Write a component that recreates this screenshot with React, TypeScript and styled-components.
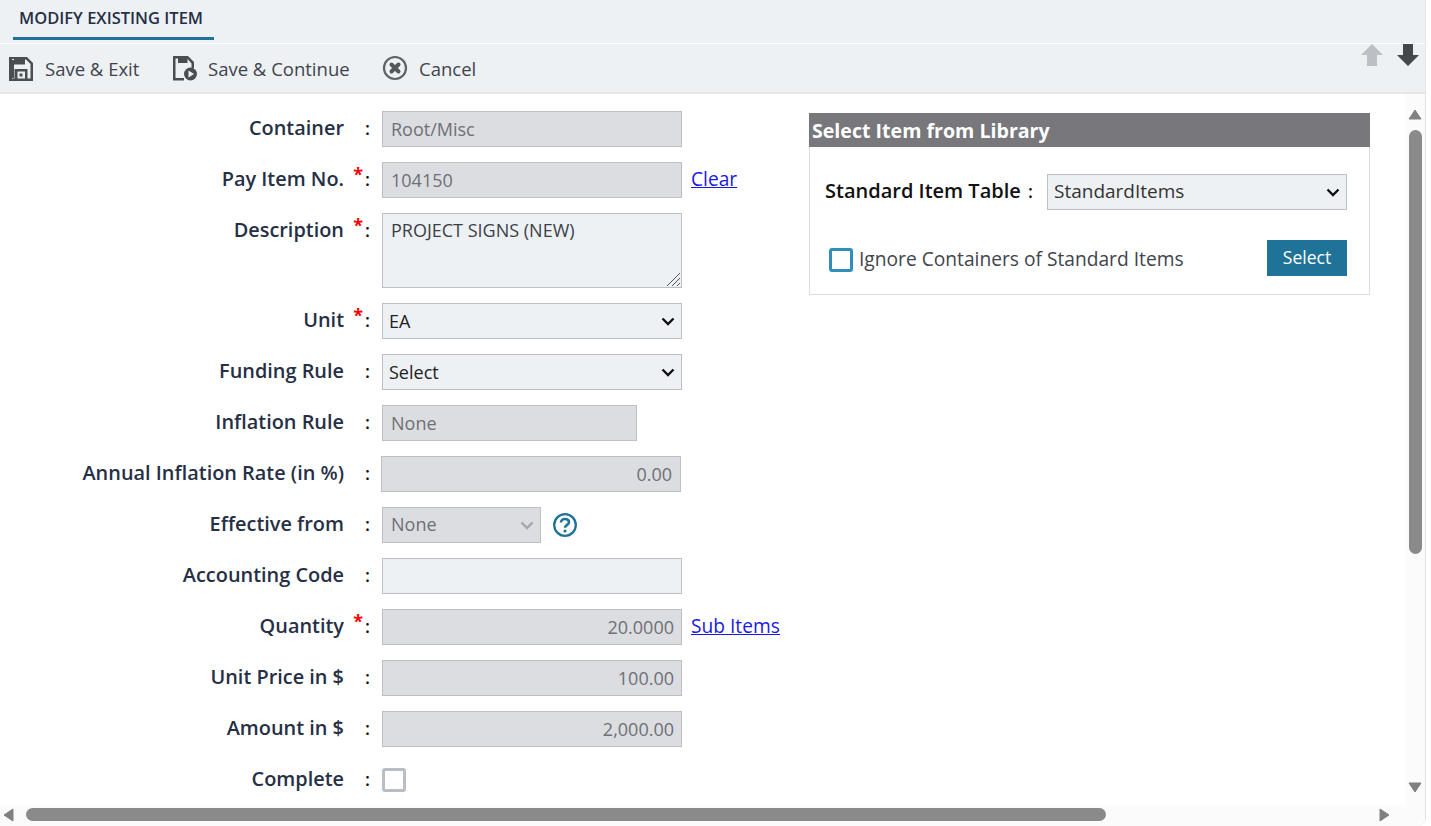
import React from "react";
import styled, { createGlobalStyle } from "styled-components";

const GlobalStyle = createGlobalStyle`
  html, body {
    margin: 0;
    padding: 0;
    height: 100%;
    overflow: hidden;
    background: #fff;
    font-family: "Open Sans", "Noto Sans", sans-serif;
  }
`;

type FieldProps = {
  label: string;
  required?: boolean;
  children: React.ReactNode;
};

const Field = ({ label, required, children }: FieldProps) => (
  <Row>
    <Label>{label}</Label>
    <Sep>
      {required && <Star>*</Star>}:
    </Sep>
    <Control>{children}</Control>
  </Row>
);

const SaveIcon = () => (
  <svg width="24" height="25" viewBox="0 0 24 25">
    <path
      fill="#4a4d52"
      fillRule="evenodd"
      d="M0 1h18l6 6v18H0V1zm5 3v18h-2V4zM16 3.500V8.500H5V3h-2V22.500H5.500V13H18.500V22.500H21.500V8L17 3.500zM8.500 15.500V22.500H16V15.500zM10.500 17.500H13.500V20.500H10.500z"
    />
  </svg>
);

const SaveContinueIcon = () => (
  <svg width="26" height="25" viewBox="0 0 26 25">
    <path
      fill="#4a4d52"
      d="M1 0h15l6 6v6h-2.500V7.500L15.500 3V7H6V2.500H3.500v19.500H12V24.500H1V0z"
    />
    <circle cx="18.500" cy="18" r="6.500" fill="#4a4d52" />
    <path fill="#eef1f4" d="M16.500 14.500l5.500 3.500-5.500 3.500z" />
  </svg>
);

const CancelIcon = () => (
  <svg width="26" height="26" viewBox="0 0 26 26">
    <circle cx="13" cy="13" r="11" fill="none" stroke="#5e6166" strokeWidth="2.200" />
    <path stroke="#54575c" strokeWidth="4" strokeLinecap="round" d="M9.500 9.500l7 7M16.500 9.500l-7 7" />
  </svg>
);

const HelpIcon = () => (
  <svg width="26" height="26" viewBox="0 0 26 26">
    <circle cx="13" cy="13" r="10.800" fill="none" stroke="#1f7399" strokeWidth="2.300" />
    <path
      fill="none"
      stroke="#1f7399"
      strokeWidth="2.600"
      d="M9 10.500c0-2.300 1.800-3.500 4-3.500s4 1.200 4 3.200c0 2.800-4 2.600-4 5.600"
    />
    <circle cx="13" cy="19" r="1.600" fill="#1f7399" />
  </svg>
);

const NavArrow = ({ down, color }: { down?: boolean; color: string }) => (
  <svg width="24" height="24" viewBox="0 0 24 24">
    <path
      fill={color}
      d={down ? "M7 1h10v11h6L12 23 1 12h6z" : "M12 1l11 11h-6v11H7V12H1z"}
    />
  </svg>
);

const Tri = ({ dir }: { dir: "up" | "down" | "left" | "right" }) => {
  const paths = {
    up: "M7 2l6 9H1z",
    down: "M1 3h12L7 12z",
    left: "M11 1v12L2 7z",
    right: "M2 1v12l9-6z",
  };
  return (
    <svg width="14" height="14" viewBox="0 0 14 14">
      <path fill="#808080" stroke="#808080" strokeLinejoin="round" d={paths[dir]} />
    </svg>
  );
};

export default function App() {
  return (
    <Page>
      <GlobalStyle />
      <TabBar>
        <Tab>MODIFY EXISTING ITEM</Tab>
      </TabBar>
      <Toolbar>
        <ToolButton $width={163} $gap={12}>
          <SaveIcon />
          <span>Save &amp; Exit</span>
        </ToolButton>
        <ToolButton $width={210} $gap={10}>
          <SaveContinueIcon />
          <span>Save &amp; Continue</span>
        </ToolButton>
        <ToolButton $width={110} $gap={11}>
          <CancelIcon />
          <span>Cancel</span>
        </ToolButton>
        <NavGroup>
          <NavArrow color="#bcc0c4" />
          <NavArrow down color="#44474c" />
        </NavGroup>
      </Toolbar>
      <Middle>
        <Content>
          <Form>
            <Field label="Container">
              <TextInput $w={300} $disabled readOnly value="Root/Misc" />
            </Field>
            <Field label="Pay Item No." required>
              <TextInput $w={300} $disabled readOnly value="104150" />
              <Link href="#">Clear</Link>
            </Field>
            <Field label="Description" required>
              <TextArea readOnly value="PROJECT SIGNS (NEW)" />
            </Field>
            <Field label="Unit" required>
              <Select $w={300} defaultValue="EA">
                <option>EA</option>
              </Select>
            </Field>
            <Field label="Funding Rule">
              <Select $w={300} defaultValue="Select">
                <option>Select</option>
              </Select>
            </Field>
            <Field label="Inflation Rule">
              <TextInput $w={255} $disabled readOnly value="None" />
            </Field>
            <Field label="Annual Inflation Rate (in %)">
              <TextInput $w={300} $disabled $right $shift readOnly value="0.00" />
            </Field>
            <Field label="Effective from">
              <Select $w={159} disabled defaultValue="None">
                <option>None</option>
              </Select>
              <HelpSlot>
                <HelpIcon />
              </HelpSlot>
            </Field>
            <Field label="Accounting Code">
              <TextInput $w={300} readOnly value="" />
            </Field>
            <Field label="Quantity" required>
              <TextInput $w={300} $disabled $right readOnly value="20.0000" />
              <Link href="#">Sub Items</Link>
            </Field>
            <Field label="Unit Price in $">
              <TextInput $w={300} $disabled $right readOnly value="100.00" />
            </Field>
            <Field label="Amount in $">
              <TextInput $w={300} $disabled $right readOnly value="2,000.00" />
            </Field>
            <Field label="Complete">
              <CheckBox type="checkbox" $color="#b9bec6" />
            </Field>
          </Form>
          <LibraryPanel>
            <PanelTitle>Select Item from Library</PanelTitle>
            <PanelBody>
              <TableRow>
                <TableLabel>Standard Item Table</TableLabel>
                <TableColon>:</TableColon>
                <PanelSelect $w={300} defaultValue="StandardItems">
                  <option>StandardItems</option>
                </PanelSelect>
              </TableRow>
              <IgnoreRow>
                <IgnoreCheck type="checkbox" $color="#2f8fbc" />
                <IgnoreText>Ignore Containers of Standard Items</IgnoreText>
                <SelectButton>Select</SelectButton>
              </IgnoreRow>
            </PanelBody>
          </LibraryPanel>
        </Content>
        <VTrack>
          <Tri dir="up" />
          <VThumb />
          <Tri dir="down" />
        </VTrack>
      </Middle>
      <HTrack>
        <Tri dir="left" />
        <HThumb />
        <Tri dir="right" />
      </HTrack>
    </Page>
  );
}

const chevron = (color: string) =>
  `url("data:image/svg+xml,%3Csvg xmlns='http://www.w3.org/2000/svg' width='14' height='9'%3E%3Cpath d='M1.500 1.500L7 7l5.500-5.500' fill='none' stroke='${color}' stroke-width='2.400'/%3E%3C/svg%3E")`;

const resizeGrip = `url("data:image/svg+xml,%3Csvg xmlns='http://www.w3.org/2000/svg' width='15' height='15'%3E%3Cpath d='M1 14L14 1M6 14l8-8M11 14l3-3' stroke='%23555' stroke-width='1' fill='none'/%3E%3C/svg%3E")`;

const Page = styled.div`
  width: 1426px;
  height: 826px;
  display: flex;
  flex-direction: column;
  border-right: 1px solid #e3e4e6;
  border-bottom-right-radius: 8px;
  overflow: hidden;
  box-sizing: border-box;
`;

const TabBar = styled.div`
  height: 43px;
  background: #eef1f4;
  border-bottom: 1px solid #fff;
  padding-left: 13px;
  flex: none;
`;

const Tab = styled.div`
  width: 201px;
  height: 40px;
  box-sizing: border-box;
  padding: 7px 0 0 6px;
  border-bottom: 3px solid #1f7399;
  font-size: 16.500px;
  line-height: 22px;
  font-weight: 600;
  color: #262f45;
`;

const Toolbar = styled.div`
  height: 50px;
  flex: none;
  box-sizing: border-box;
  background: #eef1f4;
  border-bottom: 2px solid #e4e6e9;
  padding-left: 9px;
  display: flex;
  align-items: center;
`;

const ToolButton = styled.div<{ $width: number; $gap: number }>`
  width: ${(p) => p.$width}px;
  display: flex;
  align-items: center;
  gap: ${(p) => p.$gap}px;
  font-size: 18.500px;
  color: #3f444c;
`;

const NavGroup = styled.div`
  margin-left: auto;
  margin-right: 5px;
  margin-top: -27px;
  display: flex;
  gap: 12px;
`;

const Middle = styled.div`
  flex: 1;
  min-height: 0;
  display: flex;
`;

const Content = styled.div`
  flex: 1;
  display: flex;
  align-items: flex-start;
  background: #fff;
`;

const Form = styled.div`
  width: 809px;
  flex: none;
  padding-top: 17px;
  display: flex;
  flex-direction: column;
  gap: 15px;
`;

const Row = styled.div`
  display: flex;
  align-items: flex-start;
`;

const Label = styled.div`
  width: 344px;
  flex: none;
  text-align: right;
  font-size: 19.900px;
  line-height: 34px;
  font-weight: 600;
  color: #262f45;
`;

const Sep = styled.div`
  width: 26px;
  flex: none;
  margin-right: 12px;
  text-align: right;
  font-size: 18px;
  line-height: 34px;
  font-weight: 600;
  color: #111;
`;

const Star = styled.sup`
  color: #f00;
  font-size: 18px;
  line-height: 0;
  font-weight: 700;
  vertical-align: 5px;
  margin-right: 2px;
`;

const Control = styled.div`
  display: flex;
  align-items: center;
  min-height: 36px;
`;

const fieldBase = `
  box-sizing: border-box;
  height: 36px;
  border: 1px solid #bcc0c6;
  border-radius: 0;
  font-family: "Open Sans", "Noto Sans", sans-serif;
  font-size: 18px;
  outline: none;
`;

const TextInput = styled.input<{
  $w: number;
  $disabled?: boolean;
  $right?: boolean;
  $shift?: boolean;
}>`
  ${fieldBase}
  width: ${(p) => p.$w}px;
  padding: 0 ${(p) => (p.$shift ? 8 : 7)}px 0 8px;
  margin-left: ${(p) => (p.$shift ? -1 : 0)}px;
  text-align: ${(p) => (p.$right ? "right" : "left")};
  background: ${(p) => (p.$disabled ? "#dcdde0" : "#eef1f4")};
  color: #6d7076;
`;

const TextArea = styled.textarea`
  ${fieldBase}
  display: block;
  width: 300px;
  height: 75px;
  padding: 4px 8px;
  background: #eef1f4;
  color: #3a3f47;

  &::-webkit-resizer {
    background: ${resizeGrip} no-repeat center;
  }
`;

const Select = styled.select<{ $w: number }>`
  ${fieldBase}
  appearance: none;
  width: ${(p) => p.$w}px;
  padding: 0 24px 0 6px;
  background: #eef1f4 ${chevron("%23111")} no-repeat right 6px center;
  color: #222;

  &:disabled {
    padding: 0 24px 2px 8px;
    background: #dcdde0 ${chevron("%23a4a6aa")} no-repeat right 6px center;
    color: #6d7076;
    opacity: 1;
  }
`;

const PanelSelect = styled(Select)`
  padding-bottom: 2px;
  font-size: 19px;
  color: #333;
`;

const Link = styled.a`
  margin-left: 9px;
  margin-bottom: 3px;
  font-size: 19.200px;
  color: #1a1ae6;
  text-decoration: underline;
`;

const HelpSlot = styled.div`
  margin-left: 11px;
  display: flex;
`;

const CheckBox = styled.input<{ $color: string }>`
  appearance: none;
  margin: 0;
  width: 24px;
  height: 24px;
  box-sizing: border-box;
  border: 3px solid ${(p) => p.$color};
  border-radius: 3px;
  background: #fff;
  flex: none;
`;

const IgnoreCheck = styled(CheckBox)`
  margin-top: 4px;
`;

const LibraryPanel = styled.div`
  width: 561px;
  margin-top: 19px;
  box-sizing: border-box;
  border: 1px solid #dcdde0;
  border-top: none;
  height: 182px;
`;

const PanelTitle = styled.div`
  height: 34px;
  margin-left: -1px;
  margin-right: -1px;
  padding-left: 3px;
  background: #77777c;
  color: #fff;
  font-size: 19.600px;
  line-height: 35px;
  font-weight: 700;
`;

const PanelBody = styled.div`
  padding: 27px 22px 0 15px;
`;

const TableRow = styled.div`
  display: flex;
  align-items: center;
`;

const TableLabel = styled.div`
  width: 195px;
  flex: none;
  margin-bottom: 3px;
  white-space: nowrap;
  font-size: 20px;
  font-weight: 600;
  color: #111;
`;

const TableColon = styled.div`
  width: 27px;
  flex: none;
  margin-bottom: 3px;
  padding-left: 8px;
  box-sizing: border-box;
  font-size: 18px;
  font-weight: 600;
  color: #111;
`;

const IgnoreRow = styled.div`
  display: flex;
  align-items: center;
  margin-top: 30px;
  padding-left: 4px;
`;

const IgnoreText = styled.div`
  margin-left: 6px;
  font-size: 19.200px;
  color: #3f444c;
`;

const SelectButton = styled.div`
  margin-left: auto;
  width: 80px;
  height: 36px;
  background: #1f7399;
  color: #fff;
  font-size: 17.500px;
  line-height: 35px;
  text-align: center;
`;

const VTrack = styled.div`
  width: 20px;
  flex: none;
  background: #fbfbfb;
  display: flex;
  flex-direction: column;
  align-items: center;
  padding: 14px 0 11px;
  box-sizing: border-box;
`;

const VThumb = styled.div`
  width: 13px;
  height: 424px;
  margin: 8px 0 auto;
  background: #8a8a8a;
  border-radius: 7px;
`;

const HTrack = styled.div`
  height: 21px;
  flex: none;
  background: #fbfbfb;
  display: flex;
  align-items: center;
  padding: 0 33px 2px 2px;
  box-sizing: border-box;
`;

const HThumb = styled.div`
  width: 1080px;
  height: 13px;
  margin: 0 auto 0 10px;
  background: #8a8a8a;
  border-radius: 7px;
`;
